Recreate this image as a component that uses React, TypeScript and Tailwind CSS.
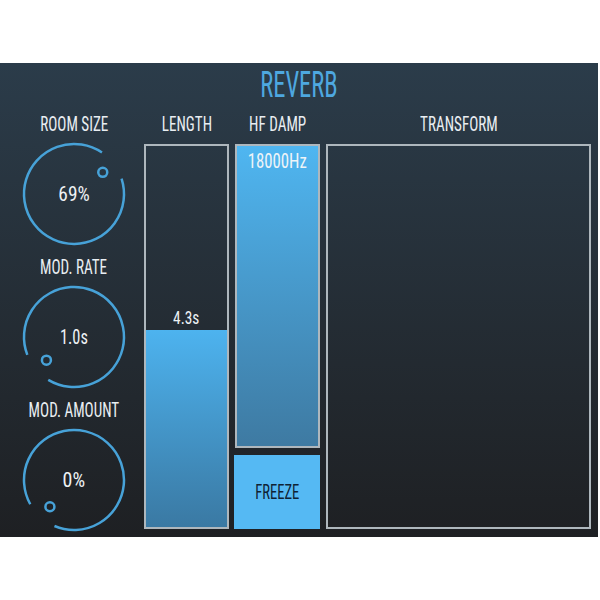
import React from 'react'

const font = { fontFamily: '"Roboto Condensed", "Liberation Sans Narrow", "DejaVu Sans Condensed", "Roboto", sans-serif' }

function polar(c: number, r: number, deg: number) {
  const rad = ((deg - 90) * Math.PI) / 180
  return [c + r * Math.cos(rad), c + r * Math.sin(rad)]
}

function Knob({ label, value, angle, squeeze }: { label: string; value: string; angle: number; squeeze: string }) {
  const c = 53
  const r = 50
  const gap = 19
  const [sx, sy] = polar(c, r, angle + gap)
  const [ex, ey] = polar(c, r, angle + 360 - gap)
  const [dx, dy] = polar(c, 36, angle)
  return (
    <div className="flex flex-col items-center">
      <div className="flex h-[24px] items-center text-[21px] leading-none text-[#e9eef2]">
        <span className="inline-block scale-x-[0.72] whitespace-nowrap">{label}</span>
      </div>
      <div className="relative mt-[5px] h-[106px] w-[106px]">
        <svg width="106" height="106" viewBox="0 0 106 106">
          <path
            d={`M ${sx} ${sy} A ${r} ${r} 0 1 1 ${ex} ${ey}`}
            fill="none"
            stroke="#47a2d8"
            strokeWidth="2.5"
          />
          <circle cx={dx} cy={dy} r="4.5" fill="none" stroke="#47a2d8" strokeWidth="2.5" />
        </svg>
        <div className="absolute inset-0 flex items-center justify-center text-[21px] leading-none text-[#eef2f5]">
          <span className={`inline-block ${squeeze}`}>{value}</span>
        </div>
      </div>
    </div>
  )
}

function ColumnLabel({ children }: { children: React.ReactNode }) {
  return (
    <div className="flex h-[24px] items-center justify-center text-[21px] leading-none text-[#e9eef2]">
      <span className="inline-block scale-x-[0.72] whitespace-nowrap">{children}</span>
    </div>
  )
}

export default function App() {
  return (
    <div className="h-[600px] w-[600px] bg-white" style={font}>
      <div className="h-[63px]" />
      <div className="flex h-[474px] w-[598px] flex-col bg-linear-to-b from-[#2b3c4a] to-[#1e2023]">
        <div className="flex h-[49px] items-center justify-center pb-[5px] text-[36px] leading-none text-[#4ea8e0]">
          <span className="inline-block scale-x-[0.68]">REVERB</span>
        </div>
        <div className="flex">
          <div className="flex w-[144px] flex-col pl-[4px]">
            <Knob label="ROOM SIZE" value="69%" angle={53} squeeze="scale-x-[0.92]" />
            <div className="mt-[8px]">
              <Knob label="MOD. RATE" value="1.0s" angle={-130} squeeze="scale-x-[0.78]" />
            </div>
            <div className="mt-[8px]">
              <Knob label="MOD. AMOUNT" value="0%" angle={-138} squeeze="scale-x-[0.95]" />
            </div>
          </div>

          <div className="flex w-[85px] flex-col">
            <ColumnLabel>LENGTH</ColumnLabel>
            <div className="mt-[8px] flex h-[385px] flex-col border-2 border-[#aeb7bd]">
              <div className="flex flex-1 items-end justify-center pb-[3px] text-[19px] leading-none text-[#eef2f5]">
                <span className="inline-block scale-x-[0.81]">4.3s</span>
              </div>
              <div className="h-[197px] bg-linear-to-b from-[#4db3ef] to-[#3a79a3]" />
            </div>
          </div>

          <div className="ml-[6px] flex w-[85px] flex-col">
            <ColumnLabel>HF DAMP</ColumnLabel>
            <div className="mt-[8px] flex h-[304px] justify-center border-2 border-[#aeb7bd] bg-linear-to-b from-[#4fb6f1] to-[#3e7aa2] pt-[5px] text-[20px] leading-none text-[#eef4f8]">
              <span className="inline-block h-[20px] scale-x-[0.84]">18000Hz</span>
            </div>
            <div className="mt-[7px] -ml-[1px] flex h-[74px] items-center justify-center bg-[#55b9f3] text-[20px] leading-none text-[#0f2233]">
              <span className="inline-block scale-x-[0.73]">FREEZE</span>
            </div>
          </div>

          <div className="ml-[6px] flex w-[265px] flex-col">
            <ColumnLabel>TRANSFORM</ColumnLabel>
            <div className="mt-[8px] h-[385px] border-2 border-[#aeb7bd]" />
          </div>
        </div>
      </div>
    </div>
  )
}
